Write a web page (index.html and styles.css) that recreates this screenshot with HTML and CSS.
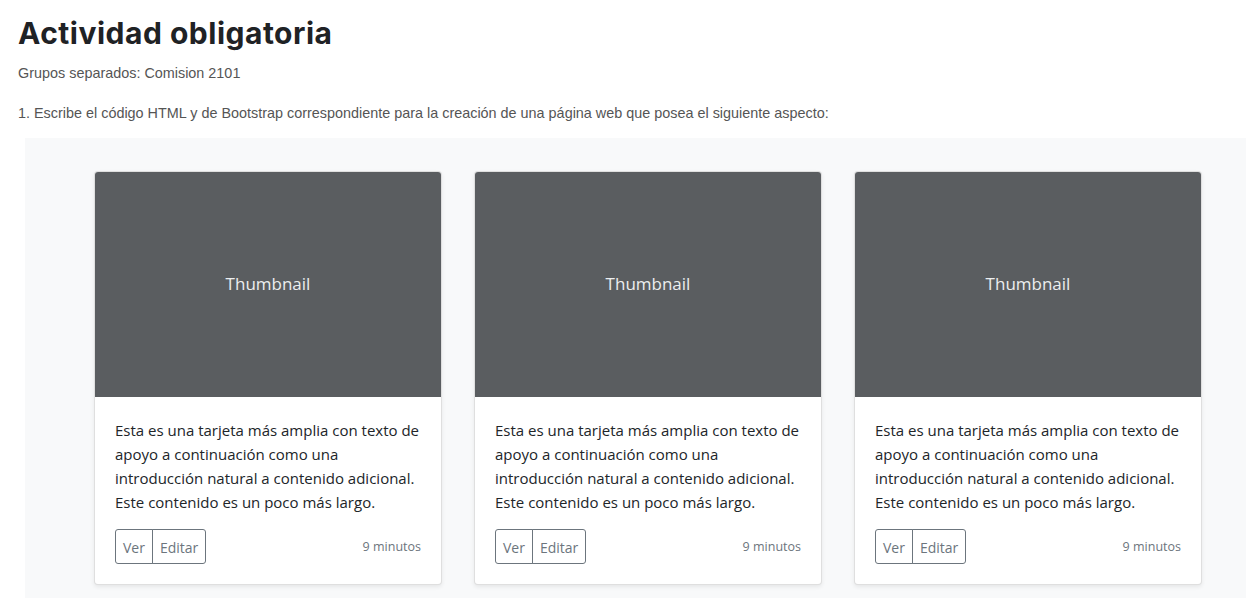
FILE: index.html
```html
<!DOCTYPE html>
<html lang="es">
<head>
<meta charset="utf-8">
<title>Actividad obligatoria</title>
<link rel="stylesheet" href="styles.css">
</head>
<body>
<div class="page">
  <h2 class="title">Actividad obligatoria</h2>
  <p class="groups">Grupos separados: Comision 2101</p>
  <p class="task">1. Escribe el código HTML y de Bootstrap correspondiente para la creación de una página web que posea el siguiente aspecto:</p>
  <div class="album">
    <div class="card">
      <div class="thumb">Thumbnail</div>
      <div class="card-body">
        <p class="card-text">Esta es una tarjeta más amplia con texto de apoyo a continuación como una introducción natural a contenido adicional. Este contenido es un poco más largo.</p>
        <div class="card-footer-row">
          <div class="btn-group"><span class="btn">Ver</span><span class="btn">Editar</span></div>
          <small class="time">9 minutos</small>
        </div>
      </div>
    </div>
    <div class="card">
      <div class="thumb">Thumbnail</div>
      <div class="card-body">
        <p class="card-text">Esta es una tarjeta más amplia con texto de apoyo a continuación como una introducción natural a contenido adicional. Este contenido es un poco más largo.</p>
        <div class="card-footer-row">
          <div class="btn-group"><span class="btn">Ver</span><span class="btn">Editar</span></div>
          <small class="time">9 minutos</small>
        </div>
      </div>
    </div>
    <div class="card">
      <div class="thumb">Thumbnail</div>
      <div class="card-body">
        <p class="card-text">Esta es una tarjeta más amplia con texto de apoyo a continuación como una introducción natural a contenido adicional. Este contenido es un poco más largo.</p>
        <div class="card-footer-row">
          <div class="btn-group"><span class="btn">Ver</span><span class="btn">Editar</span></div>
          <small class="time">9 minutos</small>
        </div>
      </div>
    </div>
  </div>
</div>
</body>
</html>
```
FILE: styles.css
```css
html, body {
  margin: 0;
  padding: 0;
  background: #fff;
  overflow: hidden;
}
.page {
  padding: 0 0 0 18px;
  font-family: "Liberation Sans", Arial, sans-serif;
  color: #555;
}
.title {
  margin: 0;
  padding-top: 14px;
  font-family: Inter, "Noto Sans", sans-serif;
  font-weight: 700;
  font-size: 30px;
  line-height: 38px;
  color: #1f2225;
  letter-spacing: 0.5px;
}
.groups {
  margin: 12px 0 0;
  font-size: 14.4px;
  line-height: 18px;
}
.task {
  margin: 22px 0 0;
  font-size: 14.4px;
  line-height: 18px;
}
.album {
  margin: 16px 0 0 7px;
  width: 1246px;
  box-sizing: border-box;
  background: #f8f9fa;
  padding: 33px 69px 13px;
  display: flex;
  gap: 32px;
}
.card {
  width: 348px;
  flex: none;
  box-sizing: border-box;
  background: #fff;
  border: 1px solid rgba(0,0,0,.125);
  border-radius: 4px;
  box-shadow: 0 .125rem .25rem rgba(0,0,0,.075);
  overflow: hidden;
  font-family: "Open Sans", "Noto Sans", sans-serif;
}
.thumb {
  height: 225px;
  background: #5a5d60;
  color: #eceeef;
  font-size: 17px;
  padding-bottom: 2px;
  box-sizing: border-box;
  display: flex;
  align-items: center;
  justify-content: center;
}
.card-body {
  padding: 21px 20px 20px;
}
.card-text {
  margin: 0 0 15px;
  font-size: 15px;
  line-height: 24px;
  color: #212529;
}
.card-footer-row {
  display: flex;
  align-items: center;
  justify-content: space-between;
}
.btn-group {
  display: flex;
}
.btn {
  display: block;
  border: 1px solid #6c757d;
  color: #6c757d;
  font-size: 14px;
  line-height: 21px;
  padding: 7px 7px 5px;
}
.btn:first-child {
  border-radius: 3px 0 0 3px;
}
.btn + .btn {
  margin-left: -1px;
  border-radius: 0 3px 3px 0;
}
.time {
  font-size: 12.5px;
  color: #6c757d;
}
```
